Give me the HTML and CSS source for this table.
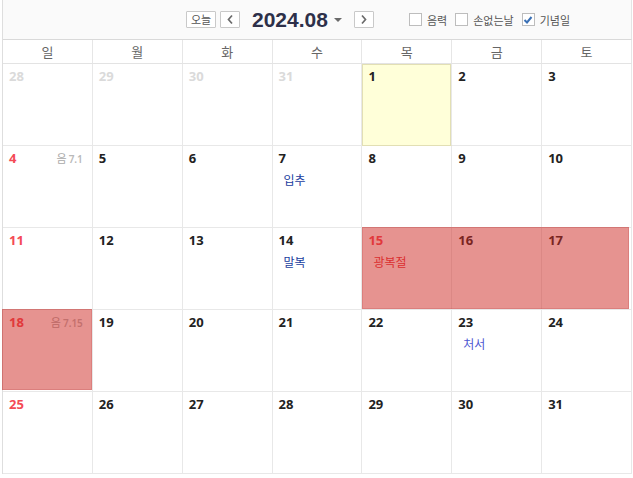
FILE: index.html
```html
<!DOCTYPE html>
<html lang="ko">
<head>
<meta charset="utf-8">
<title>달력</title>
<link rel="stylesheet" href="styles.css">
</head>
<body>
<div class="cal">
  <div class="toolbar">
    <div class="nav">
      <button class="btn today">오늘</button>
      <button class="btn arrow" aria-label="이전"><svg width="8" height="11" viewBox="0 0 8 11"><path d="M6 1.5 L2.5 5.5 L6 9.5" fill="none" stroke="#6b6b6b" stroke-width="1.7"/></svg></button>
      <div class="title">2024.08<span class="caret"></span></div>
      <button class="btn arrow" aria-label="다음"><svg width="8" height="11" viewBox="0 0 8 11"><path d="M2 1.5 L5.5 5.5 L2 9.5" fill="none" stroke="#6b6b6b" stroke-width="1.7"/></svg></button>
    </div>
    <div class="opts">
      <label class="opt"><span class="box"></span>음력</label>
      <label class="opt"><span class="box"></span>손없는날</label>
      <label class="opt"><span class="box"><svg width="10" height="10" viewBox="0 0 10 10"><path d="M1.5 5 L4 7.5 L8.5 2" fill="none" stroke="#3a70b5" stroke-width="2"/></svg></span>기념일</label>
    </div>
  </div>
  <div class="grid">
    <div class="dow">일</div><div class="dow">월</div><div class="dow">화</div><div class="dow">수</div><div class="dow">목</div><div class="dow">금</div><div class="dow">토</div>

    <div class="cell other"><div class="head"><span class="num">28</span></div></div>
    <div class="cell other"><div class="head"><span class="num">29</span></div></div>
    <div class="cell other"><div class="head"><span class="num">30</span></div></div>
    <div class="cell other"><div class="head"><span class="num">31</span></div></div>
    <div class="cell today-cell"><div class="head"><span class="num">1</span></div></div>
    <div class="cell"><div class="head"><span class="num">2</span></div></div>
    <div class="cell"><div class="head"><span class="num">3</span></div></div>

    <div class="cell sun"><div class="head"><span class="num">4</span><span class="lunar">음<b>7.1</b></span></div></div>
    <div class="cell"><div class="head"><span class="num">5</span></div></div>
    <div class="cell"><div class="head"><span class="num">6</span></div></div>
    <div class="cell"><div class="head"><span class="num">7</span></div><div class="ev blue">입추</div></div>
    <div class="cell"><div class="head"><span class="num">8</span></div></div>
    <div class="cell"><div class="head"><span class="num">9</span></div></div>
    <div class="cell"><div class="head"><span class="num">10</span></div></div>

    <div class="cell sun"><div class="head"><span class="num">11</span></div></div>
    <div class="cell"><div class="head"><span class="num">12</span></div></div>
    <div class="cell"><div class="head"><span class="num">13</span></div></div>
    <div class="cell"><div class="head"><span class="num">14</span></div><div class="ev blue">말복</div></div>
    <div class="cell sun anchor"><div class="head"><span class="num">15</span></div><div class="ev red">광복절</div><div class="mark span3"></div></div>
    <div class="cell"><div class="head"><span class="num">16</span></div></div>
    <div class="cell"><div class="head"><span class="num">17</span></div></div>

    <div class="cell sun anchor"><div class="head"><span class="num">18</span><span class="lunar">음<b>7.15</b></span></div><div class="mark span1"></div></div>
    <div class="cell"><div class="head"><span class="num">19</span></div></div>
    <div class="cell"><div class="head"><span class="num">20</span></div></div>
    <div class="cell"><div class="head"><span class="num">21</span></div></div>
    <div class="cell"><div class="head"><span class="num">22</span></div></div>
    <div class="cell"><div class="head"><span class="num">23</span></div><div class="ev violet">처서</div></div>
    <div class="cell"><div class="head"><span class="num">24</span></div></div>

    <div class="cell sun"><div class="head"><span class="num">25</span></div></div>
    <div class="cell"><div class="head"><span class="num">26</span></div></div>
    <div class="cell"><div class="head"><span class="num">27</span></div></div>
    <div class="cell"><div class="head"><span class="num">28</span></div></div>
    <div class="cell"><div class="head"><span class="num">29</span></div></div>
    <div class="cell"><div class="head"><span class="num">30</span></div></div>
    <div class="cell"><div class="head"><span class="num">31</span></div></div>
  </div>
</div>
</body>
</html>
```
FILE: styles.css
```css
* { box-sizing: border-box; }
html, body { margin: 0; padding: 0; background: #fff; }
body { font-family: "Noto Sans", "Noto Sans CJK KR", sans-serif; color: #222; }

.cal {
  width: 630px;
  margin-left: 2px;
  border-left: 1px solid #dedede;
}

.toolbar {
  height: 40px;
  display: flex;
  align-items: center;
  padding-left: 183px;
  background: #fafafa;
  border-bottom: 1px solid #d9d9d9;
  border-right: 1px solid #e4e4e4;
}
.nav { display: flex; align-items: center; }
.btn {
  height: 17px;
  margin: 0;
  padding: 0;
  border: 1px solid #c9c9c9;
  background: #fff;
  border-radius: 1px;
  display: flex;
  align-items: center;
  justify-content: center;
  font-family: "Noto Sans CJK KR", sans-serif;
  font-size: 11px;
  color: #555;
  line-height: 1;
}
.today { width: 30px; margin-right: 4px; }
.arrow { width: 20px; }
.title {
  display: flex;
  align-items: center;
  margin: 0 12px 0 12px;
  font-family: "Liberation Sans", Arial, sans-serif;
  font-weight: bold;
  font-size: 21px;
  color: #2d3049;
  line-height: 24px;
}
.caret {
  width: 0; height: 0;
  margin-left: 6px;
  margin-top: 1px;
  border-left: 4px solid transparent;
  border-right: 4px solid transparent;
  border-top: 4px solid #6a6a6a;
}
.opts { display: flex; align-items: center; margin-left: 35px; gap: 8px; }
.opt {
  display: flex;
  align-items: center;
  gap: 5px;
  font-family: "Noto Sans CJK KR", sans-serif;
  font-size: 11px;
  color: #555;
}
.box {
  width: 13px; height: 13px;
  border: 1px solid #bdbdbd;
  background: #fff;
  display: flex;
  align-items: center;
  justify-content: center;
}

.grid {
  display: grid;
  grid-template-columns: repeat(7, 1fr);
  grid-template-rows: 24px repeat(5, 82px);
}
.dow {
  border-right: 1px solid #e6e6e6;
  border-bottom: 1px solid #e3e3e3;
  text-align: center;
  font-family: "Noto Sans CJK KR", sans-serif;
  font-size: 13px;
  line-height: 23px;
  color: #666;
}
.cell {
  border-right: 1px solid #e8e8e8;
  border-bottom: 1px solid #e8e8e8;
  padding: 4px 9px 0 6px;
}
.head { display: flex; justify-content: space-between; align-items: baseline; }
.num { font-size: 13px; font-weight: 700; line-height: 16px; color: #222; }
.other .num { color: #dadada; }
.sun .num { color: #f44a55; }
.lunar {
  font-family: "Noto Sans CJK KR", sans-serif;
  font-size: 11px;
  color: #a9a9a9;
}
.lunar b { font-family: "Noto Sans", sans-serif; font-size: 10px; font-weight: 600; color: #b9b9b9; margin-left: 2px; }
.today-cell { background: #ffffd9; box-shadow: inset 1px 1px 0 #e2dfb4, inset -1px 0 0 #e2dfb4; border-bottom-color: #e2dfb4; }
.ev {
  margin: 6px 0 0 5px;
  font-family: "Noto Sans CJK KR", sans-serif;
  font-size: 12px;
  line-height: 16px;
}
.blue { color: #1a3e9e; }
.red { color: #e8343c; }
.violet { color: #4d58d2; }

.anchor { position: relative; }
.mark {
  position: absolute;
  top: -1px;
  background: rgba(205, 40, 34, 0.5);
  box-shadow: inset 0 0 0 1px rgba(170, 40, 40, 0.18);
}
.span3 { left: 0; width: 300%; height: calc(100% + 1px); }
.span1 { left: -1px; width: calc(100% + 1px); height: 100%; }
```
